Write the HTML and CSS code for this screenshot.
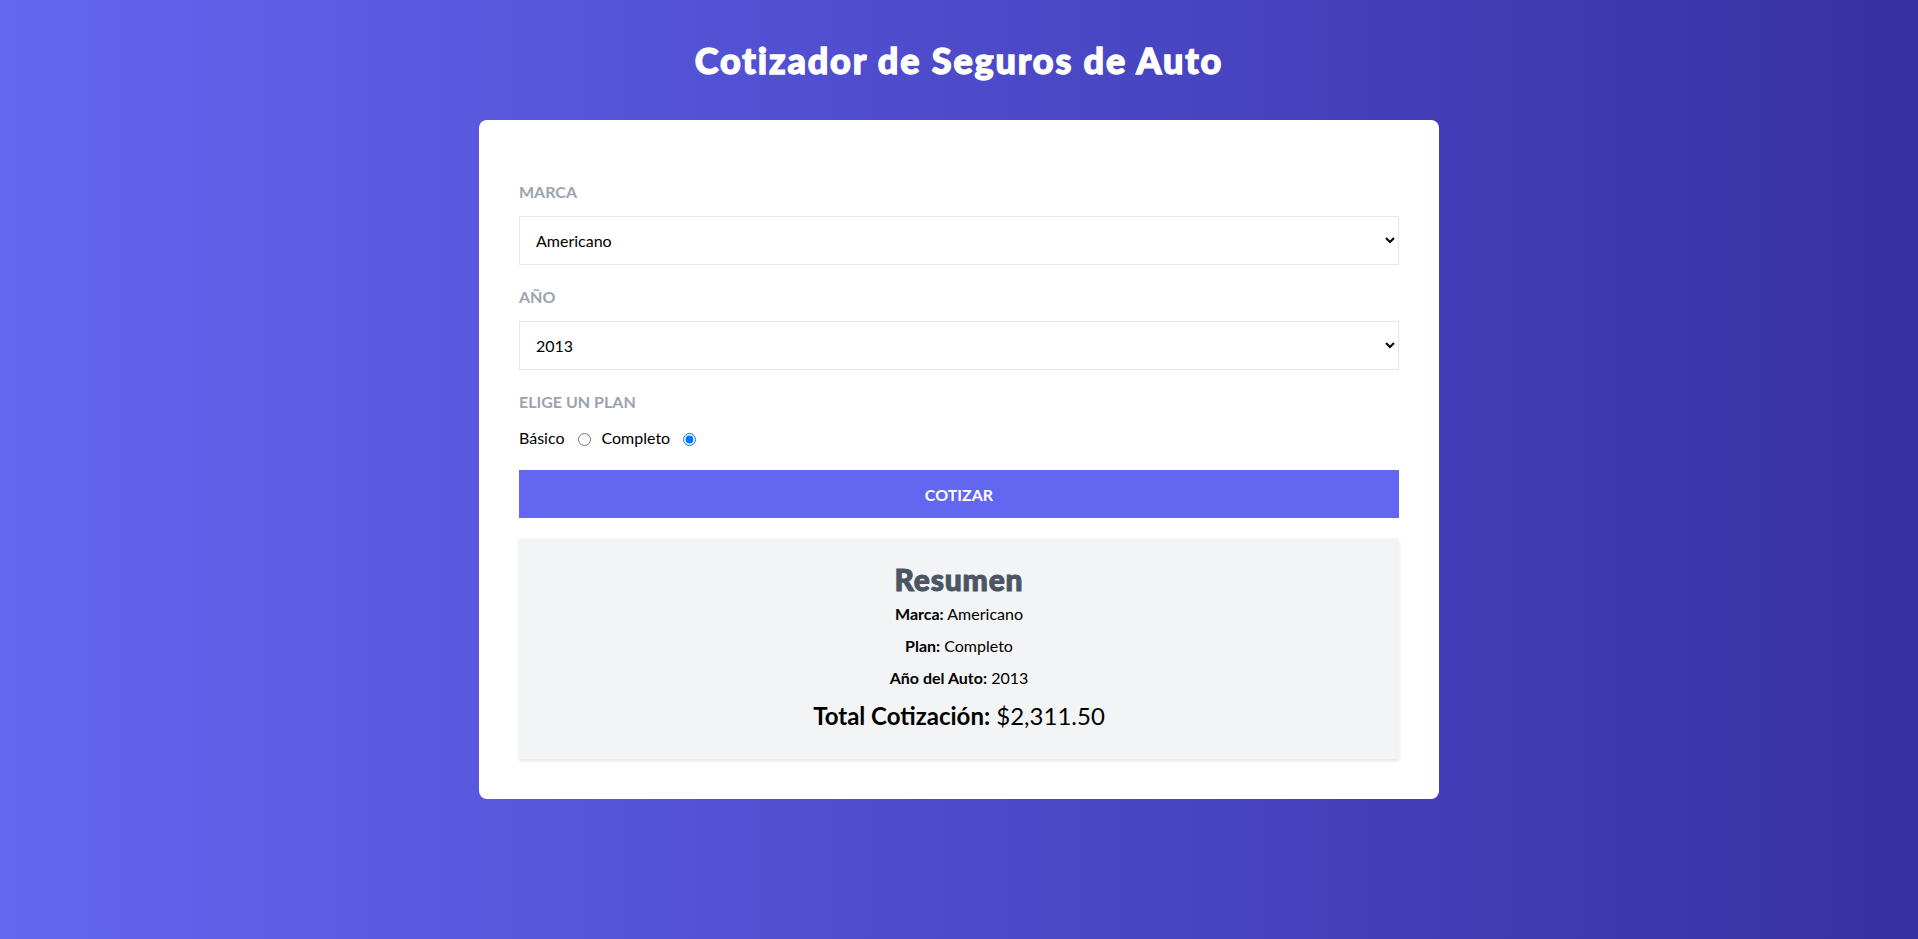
FILE: index.html
```html
<!DOCTYPE html>
<html lang="es">
<head>
    <meta charset="UTF-8">
    <meta name="viewport" content="width=device-width, initial-scale=1.0">
    <title>Cotizador de Seguros de Auto</title>
    <link rel="stylesheet" href="styles.css">
</head>
<body>
    <header>
        <h1 class="title">Cotizador de Seguros de Auto</h1>
    </header>

    <main class="card">
        <form class="form">
            <div class="field">
                <label class="field-label" for="marca">Marca</label>
                <select id="marca" class="field-select">
                    <option value="">-- Seleccione --</option>
                    <option value="1" selected>Americano</option>
                    <option value="2">Europeo</option>
                    <option value="3">Asiatico</option>
                </select>
            </div>

            <div class="field">
                <label class="field-label" for="year">Año</label>
                <select id="year" class="field-select">
                    <option value="2013" selected>2013</option>
                    <option value="2014">2014</option>
                    <option value="2015">2015</option>
                </select>
            </div>

            <div class="field">
                <label class="field-label">Elige un plan</label>
                <div class="plans">
                    <label for="basico">Básico</label>
                    <input type="radio" name="plan" id="basico" value="1">
                    <label for="completo">Completo</label>
                    <input type="radio" name="plan" id="completo" value="2" checked>
                </div>
            </div>

            <button type="button" class="btn-cotizar">Cotizar</button>
        </form>

        <div class="resumen">
            <h2 class="resumen-title">Resumen</h2>
            <p><b>Marca:</b> Americano</p>
            <p><b>Plan:</b> Completo</p>
            <p><b>Año del Auto:</b> 2013</p>
            <p class="total"><b>Total Cotización:</b> $2,311.50</p>
        </div>
    </main>
</body>
</html>
```

FILE: styles.css
```css
* {
    box-sizing: border-box;
}
body {
    margin: 0;
    min-height: 100vh;
    font-family: Lato, "Open Sans", sans-serif;
    font-size: 16px;
    line-height: 24px;
    background: linear-gradient(to right, #6366f1, #3730a3);
}
.title {
    margin: 0;
    padding: 40px 0;
    text-align: center;
    color: #fff;
    font-size: 36px;
    line-height: 40px;
    font-weight: 900;
    letter-spacing: 1.85px;
    -webkit-text-stroke: 1.3px #fff;
}
.card {
    width: 960px;
    margin: 0 auto;
    padding: 40px;
    background: #fff;
    border-radius: 8px;
}
.field {
    display: flex;
    flex-direction: column;
    gap: 12px;
    margin: 20px 0;
}
.field-label {
    color: #9ca3af;
    font-weight: 700;
    text-transform: uppercase;
}
.field-select {
    height: 49px;
    padding: 0 12px;
    font-family: inherit;
    font-size: 16px;
    color: #000;
    background: #fff;
    border: 1px solid #e5e7eb;
    border-radius: 0;
}
.plans {
    display: flex;
    align-items: center;
    gap: 8px;
}
.plans input {
    margin: 3px 3px 0 5px;
}
.btn-cotizar {
    display: block;
    width: 100%;
    height: 48px;
    padding: 12px;
    border: none;
    background: #6366f1;
    color: #fff;
    font-family: inherit;
    font-size: 16px;
    font-weight: 700;
    text-transform: uppercase;
    cursor: pointer;
}
.btn-cotizar:hover {
    background: #4f46e5;
}
.resumen {
    margin-top: 20px;
    padding: 23px 20px 27px;
    background: #f3f4f6;
    text-align: center;
    box-shadow: 0 2px 3px rgba(0, 0, 0, 0.1);
}
.resumen-title {
    margin: 0 0 5px;
    color: #4b5563;
    font-size: 30px;
    line-height: 36px;
    font-weight: 900;
    letter-spacing: 0.8px;
    -webkit-text-stroke: 1px #4b5563;
}
.resumen p {
    margin: 0 0 8px;
}
.resumen .total {
    margin: 10px 0 0;
    font-size: 24px;
    line-height: 32px;
}
```
